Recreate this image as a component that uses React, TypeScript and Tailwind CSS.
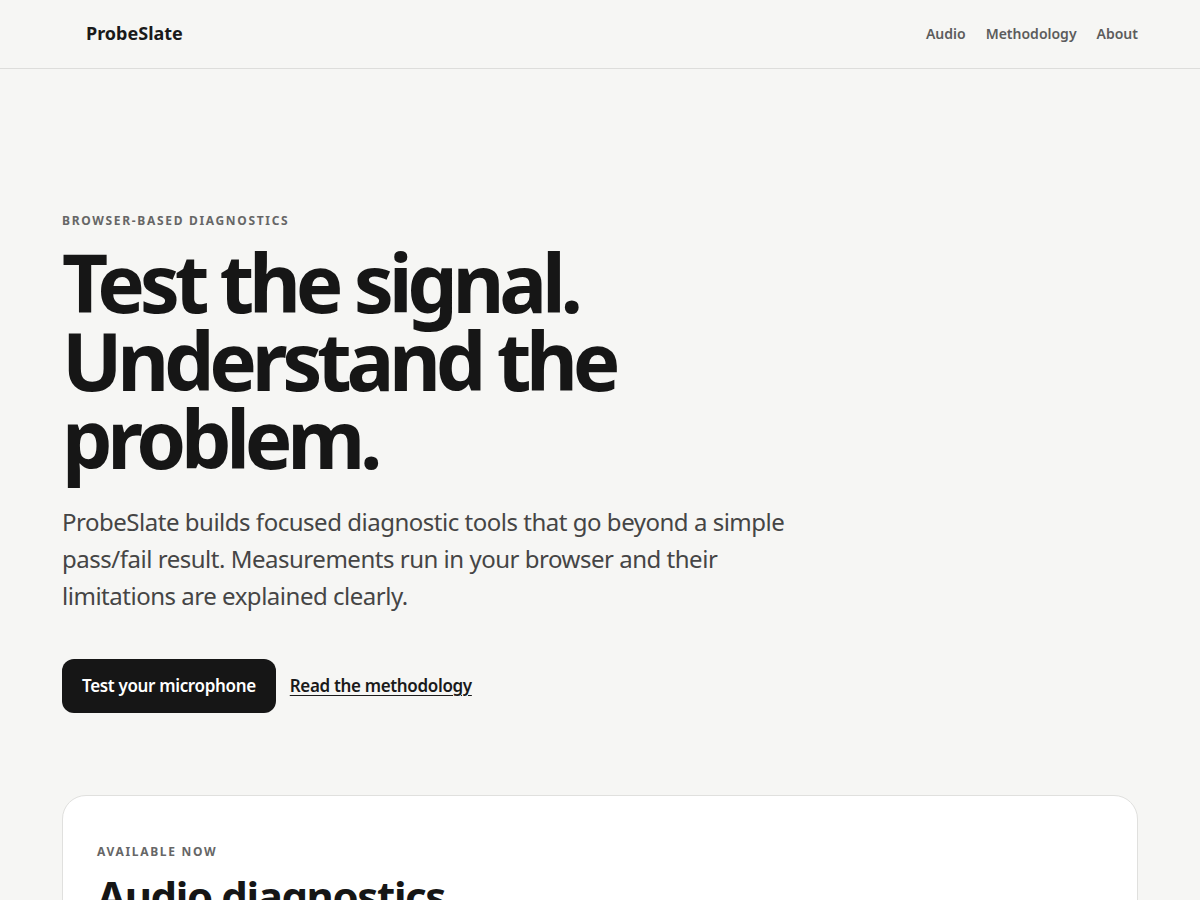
import React from "react";

export default function App() {
  return (
    <div
      className="min-h-screen bg-[#f6f6f4] text-[#161616]"
      style={{ fontFamily: '"Noto Sans", "Open Sans", sans-serif' }}
    >
      <header className="h-[69px] border-b border-[#dddddb]">
        <div className="mx-auto flex h-full max-w-[1076px] items-center justify-between pb-[2px]">
          <a className="pl-6 text-[18px] font-bold text-[#1a1a1a]">ProbeSlate</a>
          <nav className="flex items-center gap-5 text-[14px] font-semibold text-[#5c5c5c]">
            <a>Audio</a>
            <a>Methodology</a>
            <a>About</a>
          </nav>
        </div>
      </header>

      <main className="mx-auto max-w-[1076px]">
        <section className="pt-[143px]">
          <p className="text-[12px] font-bold uppercase tracking-[0.14em] text-[#666]">
            Browser-based diagnostics
          </p>
          <h1 className="mt-[13px] text-[80px] font-bold leading-[78px] tracking-[-0.066em] text-[#161616]">
            Test the signal.
            <br />
            Understand the
            <br />
            problem.
          </h1>
          <p className="mt-[26px] max-w-[760px] text-[24px] leading-[37px] tracking-[-0.02em] text-[#454545]">
            ProbeSlate builds focused diagnostic tools that go beyond a simple pass/fail result.
            Measurements run in your browser and their limitations are explained clearly.
          </p>
          <div className="mt-[45px] flex items-center gap-[14px]">
            <a className="flex h-[54px] items-center rounded-[12px] bg-[#161616] px-5 text-[17px] font-semibold tracking-[-0.02em] text-white">
              Test your microphone
            </a>
            <a className="text-[17px] font-semibold tracking-[-0.02em] text-[#1a1a1a] underline underline-offset-[3px]">
              Read the methodology
            </a>
          </div>
        </section>

        <section className="mt-[82px] rounded-[24px] border border-[#e0e0de] bg-white px-[34px] pt-[47px] pb-12">
          <p className="text-[12px] font-bold uppercase tracking-[0.14em] text-[#666]">
            Available now
          </p>
          <h2 className="mt-[12px] text-[42px] font-bold leading-[1.1] tracking-[-0.033em] text-[#161616]">
            Audio diagnostics
          </h2>
        </section>
      </main>
    </div>
  );
}
